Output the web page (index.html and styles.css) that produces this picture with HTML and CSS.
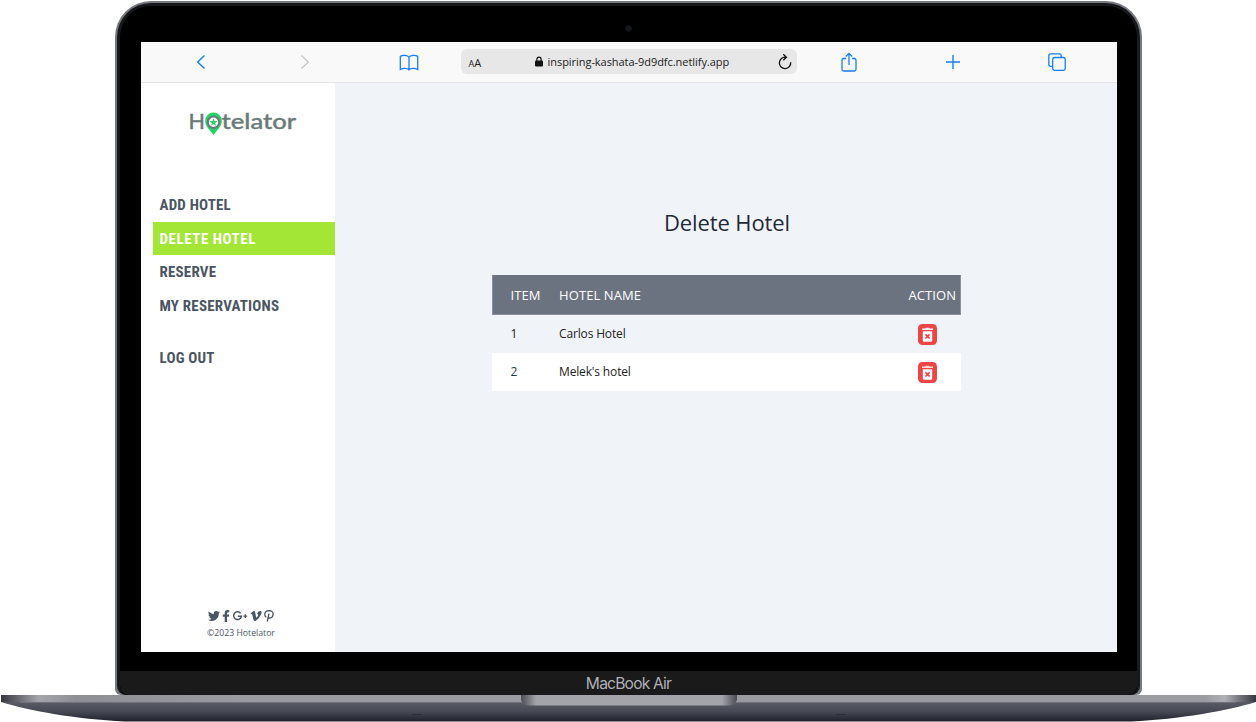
FILE: index.html
```
<!DOCTYPE html>
<html lang="en">
<head>
<meta charset="utf-8">
<title>Hotelator</title>
<link rel="stylesheet" href="styles.css">
</head>
<body>
<div class="laptop">
  <div class="lid">
    <div class="bezel">
      <div class="camera"></div>
      <div class="screen">
        <header class="toolbar">
          <svg class="tool" viewBox="0 0 24 24"><path d="M15.500 5.500 8.700 12l6.800 6.500" stroke-width="1.400"/></svg>
          <svg class="tool muted" viewBox="0 0 24 24"><path d="M8.500 5.500 15.300 12l-6.800 6.500" stroke-width="1.2"/></svg>
          <svg class="tool" viewBox="0 0 24 24"><path d="M12 7.2C10.800 5 5.500 4.800 3.300 6.400V19.500C6 18 10.600 18 12 19.800 13.400 18 18 18 20.700 19.500V6.400C18.500 4.800 13.200 5 12 7.200V19.800" stroke-width="1.3"/></svg>
          <div class="address">
            <span class="aa"><small>A</small>A</span>
            <span class="url"><svg class="lock" viewBox="0 0 8 11"><path d="M1.900 5V3.200a2.100 2.100 0 0 1 4.200 0V5" fill="none" stroke="#111" stroke-width="1.200"/><rect y="4.500" width="8" height="6" rx="1" fill="#111"/></svg><span class="host">inspiring-kashata-9d9dfc.netlify.app</span></span>
            <svg class="reload" viewBox="0 0 16 18"><path d="M8.500 4.200A5.700 5.700 0 1 0 13.700 9.300M6.300 1.300 9.400 4.300 6.300 7.300" fill="none" stroke="#111" stroke-width="1.300"/></svg>
          </div>
          <svg class="tool" viewBox="0 0 24 24"><path d="M9 8.500H6.800Q5 8.500 5 10.300V19.200Q5 21 6.800 21H17.200Q19 21 19 19.200V10.300Q19 8.500 17.200 8.500H15M12 15V3.500M8.800 6.500 12 3.300 15.200 6.500" stroke-width="1.300"/></svg>
          <svg class="tool" viewBox="0 0 24 24"><path d="M12 5V19M5 12H19" stroke-width="1.400"/></svg>
          <svg class="tool" viewBox="0 0 24 24"><rect x="7.700" y="7.500" width="12.500" height="12.800" rx="1.800" stroke-width="1.300"/><path d="M7.500 16.300H5.600Q3.800 16.300 3.800 14.500V5.700Q3.800 3.900 5.600 3.900H14.400Q16.200 3.900 16.200 5.700V7.300" stroke-width="1.300"/></svg>
        </header>
        <div class="app">
          <aside class="sidebar">
            <svg class="logo" viewBox="0 0 110 30">
              <path d="M24.500 27C21 22 16.200 18.300 16.200 12.900A8.300 8.300 0 0 1 32.800 12.900C32.800 18.300 28 22 24.500 27Z" fill="#25d366"/>
              <circle cx="24.500" cy="14.300" r="5.700" fill="#fff" stroke="#6b7a78" stroke-width="2"/>
              <path d="m24.500 10.200 1 2.800 3 .1-2.400 1.800.9 2.900-2.500-1.700-2.500 1.700.9-2.900-2.400-1.800 3-.1Z" fill="#25d366"/>
              <text class="word" x="-.6" y="20.800">H</text>
              <text class="word" x="32.600" y="20.800" textLength="74.600" lengthAdjust="spacingAndGlyphs">telator</text>
            </svg>
            <nav class="menu">
              <a><span>ADD HOTEL</span></a>
              <a class="active"><span>DELETE HOTEL</span></a>
              <a><span>RESERVE</span></a>
              <a><span>MY RESERVATIONS</span></a>
              <a class="logout"><span>LOG OUT</span></a>
            </nav>
            <footer class="footer">
              <div class="social">
                <svg width="12" height="12" viewBox="0 0 24 24"><path d="M24 4.600a10 10 0 0 1-2.800.8 5 5 0 0 0 2.100-2.700 10 10 0 0 1-3.100 1.200A4.900 4.900 0 0 0 11.700 8.400 14 14 0 0 1 1.700 3.200 4.900 4.900 0 0 0 3.200 9.700a5 5 0 0 1-2.200-.6 4.900 4.900 0 0 0 3.900 4.900 5 5 0 0 1-2.200.1 4.900 4.900 0 0 0 4.600 3.400A9.900 9.900 0 0 1 0 19.500 14 14 0 0 0 21.500 7.100 10 10 0 0 0 24 4.600Z"/></svg>
                <svg width="8" height="12" viewBox="0 0 8 12"><path d="M7.300.2V2.200H6.100Q5 2.200 5 3.300V4.600H7.200L6.900 6.700H5V12H2.700V6.700H.8V4.600H2.700V3Q2.700.1 5.600.1Z"/></svg>
                <svg width="16" height="12" viewBox="0 0 16 12"><path d="M8.600 3.200A3.900 3.900 0 1 0 9.400 6.300H5.800" fill="none" stroke="#4b5563" stroke-width="1.500"/><path d="M11.400 5.500H12.700V4.200H13.900V5.500H15.200V6.700H13.900V8H12.700V6.700H11.400Z"/></svg>
                <svg width="12" height="12" viewBox="0 0 12 12"><path d="M.5 3.400 3.200 1.200Q4.700.4 5.200 2.400L6.100 6.900Q6.500 8 7.300 6.800 8.900 4.500 7.700 4.100L6.900 4.300Q8 .8 10.200.9 12.500 1 11 4.400 9.400 8 6.200 10.600 4.400 12 3.500 9.700L2.200 4.400Q1.900 3.500 1.100 4.200Z"/></svg>
                <svg width="10" height="12" viewBox="0 0 10 12"><path d="M2.200 7.200Q.5 5.900.8 3.800 1.400.7 5.100.7 9.200.8 9.100 4.200 8.800 7.900 5.900 8 4.700 8 4.300 7.100M5 3.600 3.200 11.500" fill="none" stroke="#4b5563" stroke-width="1.300"/></svg>
              </div>
              <p class="copy">©2023 Hotelator</p>
            </footer>
          </aside>
          <main class="main">
            <h1 class="title"><span>Delete Hotel</span></h1>
            <div class="table">
              <div class="row head"><span>ITEM</span><span class="name">HOTEL NAME</span><span class="action">ACTION</span></div>
              <div class="row"><span>1</span><span>Carlos Hotel</span>
                <svg class="trash" viewBox="0 0 19 21"><rect width="19" height="21" rx="4.500" fill="#ef4444"/><path d="M4 4.600H7.200L8 3.700H11L11.800 4.600H15V6H4ZM4.800 7.200H14.200V16.400Q14.200 17.800 12.800 17.800H6.200Q4.800 17.800 4.800 16.400Z" fill="#fff"/><path d="m7.400 10.300 4.200 4.200m0-4.200-4.200 4.200" stroke="#ef4444" stroke-width="1.700"/></svg></div>
              <div class="row white"><span class="blue">2</span><span>Melek's hotel</span>
                <svg class="trash" viewBox="0 0 19 21"><rect width="19" height="21" rx="4.500" fill="#ef4444"/><path d="M4 4.600H7.200L8 3.700H11L11.800 4.600H15V6H4Z" fill="#fdd"/><path d="M4.800 7.200H14.200V16.400Q14.200 17.800 12.800 17.800H6.200Q4.800 17.800 4.800 16.400Z" fill="#fff"/><path d="m7.400 10.300 4.200 4.200m0-4.200-4.200 4.200" stroke="#ef4444" stroke-width="1.700"/></svg></div>
            </div>
          </main>
        </div>
      </div>
      <div class="chin"><span>MacBook Air</span></div>
    </div>
  </div>
  <svg class="base" viewBox="0 0 1256 27">
    <defs>
      <linearGradient id="deck"><stop offset="0" stop-color="#35363f"/><stop offset=".012" stop-color="#62636b"/><stop offset=".03" stop-color="#a5a6ab"/><stop offset=".06" stop-color="#8e8f95"/><stop offset=".2" stop-color="#9b9ca2"/><stop offset=".8" stop-color="#9b9ca2"/><stop offset=".96" stop-color="#9b9ca2"/><stop offset=".975" stop-color="#b0b1b6"/><stop offset="1" stop-color="#35363f"/></linearGradient>
      <linearGradient id="under" x2="0" y2="1"><stop offset="0" stop-color="#595b65"/><stop offset=".5" stop-color="#464853"/><stop offset="1" stop-color="#1e202b"/></linearGradient>
      <linearGradient id="notch"><stop offset="0" stop-color="#4b4c54"/><stop offset=".07" stop-color="#a3a4a9"/><stop offset=".93" stop-color="#a3a4a9"/><stop offset="1" stop-color="#4b4c54"/></linearGradient>
    </defs>
    <path d="M1 7C30 16 75 24 125 26.500H1131C1181 24 1226 16 1256 7Z" fill="url(#under)"/>
    <path d="M1 0H1256V7H1Z" fill="url(#deck)"/>
    <path d="M20 7.400H1236" stroke="#7b7d85" stroke-width=".8"/>
    <path d="M521 0H737V5Q735 10.500 728 10.500H530Q523 10.500 521 5Z" fill="url(#notch)"/>
    <path d="M412 19.500h10M836 19.500h10" stroke="#2b2d38"/>
  </svg>
</div>
</body>
</html>
```

FILE: styles.css
```
* { box-sizing: border-box; }
body { margin: 0; background: #fff; font-family: "Open Sans", "Noto Sans", sans-serif; overflow: hidden; }
.laptop { width: 1256px; height: 722px; padding-top: 1px; }
.lid { width: 1027px; height: 694px; margin-left: 115px; padding: 2px; background: #777980; border-radius: 36px 36px 6px 6px; }
.bezel { height: 692px; background: #000; border: 3px solid #17181a; border-bottom: 0; border-radius: 34px 34px 9px 9px; display: flex; flex-direction: column; align-items: center; overflow: hidden; }
.camera { width: 7px; height: 7px; margin: 19px 0 10px; border-radius: 50%; background: #17181b; border: 1px solid #101113; flex: none; }
.screen { width: 976px; height: 610px; flex: none; background: #fff; }
.chin { width: 100%; height: 24px; margin-top: 19px; padding-top: 1px; background: #1a1a1a; border-radius: 0 0 9px 9px; display: flex; justify-content: center; align-items: center; font: 15.600px/24px Inter, sans-serif; letter-spacing: -.8px; color: #b0b0b5; flex: none; }
.base { display: block; width: 1256px; height: 27px; }
.toolbar { height: 41px; padding: 0 48px 1px; background: #f9f9f9; border-bottom: 1px solid #e3e4e6; display: flex; align-items: center; gap: 80px; }
.tool { width: 24px; height: 24px; flex: none; fill: none; stroke: #147efb; }
.muted { stroke: #c4c4c6; }
.address { width: 336px; height: 25px; flex: none; margin: 0 -40px; padding: 0 4px 0 8px; border-radius: 6px; background: #e7e7e7; display: flex; align-items: center; justify-content: space-between; color: #222; }
.aa { font-size: 11px; padding-top: 1px; }
.aa small { font-size: 9px; }
.url { display: flex; align-items: center; gap: 5px; font-size: 11px; letter-spacing: -.05px; margin-left: 6px; }
.lock { width: 8px; height: 11px; }
.reload { width: 16px; height: 18px; }
.app { height: 569px; display: flex; }
.sidebar { width: 194px; display: flex; flex-direction: column; background: #fff; }
.logo { width: 110px; height: 30px; margin: 25px 0 0 48px; overflow: visible; flex: none; }
.word { font: 500 21.500px "Lato", sans-serif; fill: #6b7a78; stroke: #6b7a78; stroke-width: .35px; }
.menu { margin: 50px 0 0 12px; width: 183px; }
.menu a { display: flex; align-items: center; height: 33.600px; padding: 1px 0 0 7px; color: #4b5563; font: bold 15px/1 "Roboto Condensed", Roboto, sans-serif; letter-spacing: .2px; }
.menu span { padding-top: 1px; }
.menu .active { background: #a3e635; color: #fff; letter-spacing: .55px; }
.menu .logout { margin-top: 18px; }
.footer { margin: auto 0 12px 7px; display: flex; flex-direction: column; align-items: center; }
.social { display: flex; gap: 2px; fill: #4b5563; }
.copy { margin: 5px 0 0; font-size: 8.700px; line-height: 13px; color: #4b5563; }
.main { width: 782px; background: #f0f3f8; }
.title { margin: 121px 0 0; padding-left: 3px; height: 36px; font-size: 22px; font-weight: 400; letter-spacing: -.1px; line-height: 36px; text-align: center; color: #1f2937; }
.table { width: 469px; margin: 35px 0 0 157px; font-size: 12px; color: #222; }
.row { display: grid; grid-template-columns: 48.500px 1fr 56px; align-items: center; height: 38px; padding-left: 19px; }
.row span { padding-bottom: 2px; letter-spacing: -.15px; }
.head { height: 40px; background: #6b7280; border: 1px solid #8a919c; border-top-color: #6b7280; padding-left: 18px; color: #fff; font-size: 13px; }
.head span { padding-bottom: 0; letter-spacing: .1px; }
.action { padding-left: 5px; }
.white { background: #fff; }
.row .blue { color: #123e5c; }
.trash { width: 19px; height: 21px; margin-left: 13px; }
```
